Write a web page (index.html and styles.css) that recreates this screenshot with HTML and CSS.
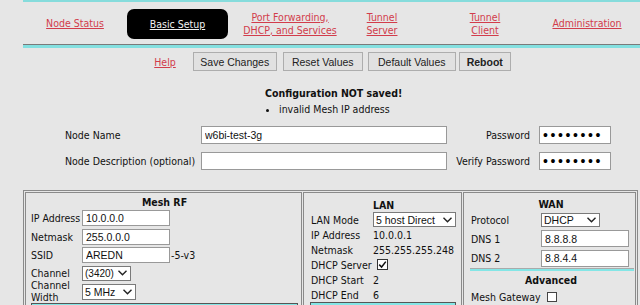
FILE: index.html
```html
<!DOCTYPE html>
<html lang="en">
<head>
  <meta charset="UTF-8" />
  <title>Basic Setup</title>
  <link rel="stylesheet" href="styles.css">
</head>
<body>
<div class="page">

  <div class="topnav">
    <div class="nav-item"><a href="#">Node Status</a></div>
    <div class="nav-item"><a href="#" class="current">Basic Setup</a></div>
    <div class="nav-item"><a href="#">Port Forwarding,<br>DHCP, and Services</a></div>
    <div class="nav-item"><a href="#">Tunnel<br>Server</a></div>
    <div class="nav-item"><a href="#">Tunnel<br>Client</a></div>
    <div class="nav-item"><a href="#">Administration</a></div>
  </div>

  <div class="actions">
    <a href="#" class="help">Help</a>
    <button class="btn save">Save Changes</button>
    <button class="btn reset">Reset Values</button>
    <button class="btn defaults">Default Values</button>
    <button class="btn reboot">Reboot</button>
  </div>

  <div class="notice">
    <div class="notice-title">Configuration NOT saved!</div>
    <ul>
      <li>invalid Mesh IP address</li>
    </ul>
  </div>

  <div class="names">
    <label>Node Name</label>
    <input type="text" class="wide" value="w6bi-test-3g">
    <label class="right">Password</label>
    <input type="password" class="pass" value="xxxxxxxx">

    <label>Node Description (optional)</label>
    <input type="text" class="wide" value="">
    <label class="right">Verify Password</label>
    <input type="password" class="pass" value="xxxxxxxx">
  </div>

  <div class="settings">
    <div class="cell meshrf">
      <div class="cell-title">Mesh RF</div>
      <div class="form rf-form">
        <label>IP Address</label>
        <input type="text" class="field" value="10.0.0.0">
        <label>Netmask</label>
        <input type="text" class="field" value="255.0.0.0">
        <label>SSID</label>
        <div class="with-suffix"><input type="text" class="field" value="AREDN"><span>-5-v3</span></div>
        <label>Channel</label>
        <div><select class="sel chan"><option>(3420)</option></select></div>
        <label class="two-line">Channel<br>Width</label>
        <div><select class="sel chwidth"><option>5 MHz</option></select></div>
      </div>
      <div class="section-bar"></div>
    </div>

    <div class="cell lan">
      <div class="cell-title">LAN</div>
      <div class="form lan-form">
        <label class="first">LAN Mode</label>
        <div class="first"><select class="sel mode"><option>5 host Direct</option></select></div>
        <label>IP Address</label>
        <span>10.0.0.1</span>
        <label>Netmask</label>
        <span>255.255.255.248</span>
        <label class="tall">DHCP Server</label>
        <div class="tall"><input type="checkbox" class="check" checked></div>
        <label>DHCP Start</label>
        <span>2</span>
        <label>DHCP End</label>
        <span>6</span>
      </div>
      <div class="section-bar lan-bar"></div>
    </div>

    <div class="cell wan">
      <div class="cell-title">WAN</div>
      <div class="form wan-form">
        <label>Protocol</label>
        <div><select class="sel proto"><option>DHCP</option></select></div>
        <label>DNS 1</label>
        <input type="text" class="field" value="8.8.8.8">
        <label>DNS 2</label>
        <input type="text" class="field" value="8.8.4.4">
      </div>
      <div class="divider"></div>
      <div class="cell-title sub">Advanced</div>
      <div class="gateway">
        <label>Mesh Gateway</label>
        <input type="checkbox" class="check">
      </div>
    </div>
  </div>

</div>
</body>
</html>
```

FILE: styles.css
```css
body {
  margin: 0;
  padding: 0;
  background: #e6e6e6;
  font-family: "DejaVu Sans Condensed", "DejaVu Sans", sans-serif;
  font-size: 10.5px;
  color: #111;
  overflow: hidden;
}

.page {
  margin-left: 23px;
  width: 616px;
}

a {
  color: #d23c4b;
}

/* top navigation */
.topnav {
  width: 640px;
  height: 43px;
  border-top: 2px solid #86dcdc;
  border-bottom: 3px solid #84e0e0;
  box-shadow: inset 0 -1px 0 #7a7a7a;
  display: grid;
  grid-template-columns: 104px 102px 122px 62px 144px 60px;
  align-items: center;
}

.nav-item {
  display: flex;
  justify-content: center;
  text-align: center;
  white-space: nowrap;
  line-height: 13px;
}

.nav-item .current {
  display: flex;
  align-items: center;
  justify-content: center;
  width: 101px;
  height: 30px;
  margin-top: 1px;
  background: #000;
  color: #f2f2f2;
  border-radius: 7px;
  margin-left: -1px;
}

/* save / reset buttons */
.actions {
  display: flex;
  align-items: center;
  justify-content: center;
  margin-top: 4px;
  padding-left: 3px;
  height: 19px;
}

.help {
  margin-right: 17px;
}

.btn {
  height: 19px;
  padding: 0;
  background: #e1e1e1;
  border: 1px solid #adadad;
  font-family: "Liberation Sans", Arial, sans-serif;
  font-size: 10.5px;
  color: #222;
}

.save { width: 84px; margin-right: 6px; }
.reset { width: 80px; margin-right: 5px; }
.defaults { width: 88px; margin-right: 3px; }
.reboot { width: 52px; font-weight: bold; }

/* error message */
.notice {
  margin: 16px 0 0 242px;
  width: max-content;
}

.notice-title {
  font-weight: bold;
  line-height: 13px;
  text-align: center;
}

.notice ul {
  margin: 3px 0 0 0;
  padding-left: 14px;
  line-height: 13px;
}

/* node name + password */
.names {
  margin: 10px 0 0 42px;
  display: grid;
  grid-template-columns: 136px 246px 92px 72px;
  grid-auto-rows: 18px;
  row-gap: 8px;
  align-items: center;
}

.names .right {
  text-align: right;
  padding-right: 9px;
}

input[type="text"],
input[type="password"] {
  box-sizing: border-box;
  height: 18px;
  padding: 0 3px;
  border: 1px solid #999;
  background: #fff;
  font-family: "Liberation Sans", Arial, sans-serif;
  font-size: 10.5px;
  color: #111;
}

.names .wide { width: 246px; }

.names .pass {
  width: 72px;
  font-size: 14px;
  letter-spacing: 2.6px;
  color: #000;
}

/* three setting columns */
.settings {
  margin-top: 20px;
  width: 611px;
  height: 140px;
  padding: 1px;
  border: 1px solid #8a8a8a;
  display: grid;
  grid-template-columns: 277px 159px 173px;
  gap: 1px;
}

.cell {
  border: 1px solid #8a8a8a;
}

.cell-title {
  font-weight: bold;
  text-align: center;
  line-height: 13px;
}

.form {
  display: grid;
  align-items: center;
}

.form .field {
  width: 88px;
  height: 16px;
}

.sel {
  appearance: none;
  -webkit-appearance: none;
  box-sizing: border-box;
  height: 15px;
  padding: 0 0 0 2px;
  border: 1px solid #7a7a7a;
  border-radius: 0;
  background: #fff url("data:image/svg+xml,%3Csvg xmlns='http://www.w3.org/2000/svg' width='9' height='6'%3E%3Cpath d='M0.5 0.8 L4.5 4.8 L8.5 0.8' fill='none' stroke='%23222' stroke-width='1.4'/%3E%3C/svg%3E") no-repeat right 3px center;
  font-family: "Liberation Sans", Arial, sans-serif;
  font-size: 10.5px;
  color: #111;
}

.check {
  appearance: none;
  -webkit-appearance: none;
  box-sizing: border-box;
  width: 11px;
  height: 11px;
  margin: 0;
  border: 1px solid #333;
  background: #fff;
  vertical-align: middle;
}

.check:checked {
  background: #fff url("data:image/svg+xml,%3Csvg xmlns='http://www.w3.org/2000/svg' width='9' height='9'%3E%3Cpath d='M1.2 4.6 L3.6 7 L7.8 1.6' fill='none' stroke='%23111' stroke-width='1.5'/%3E%3C/svg%3E") no-repeat center;
}

/* mesh rf */
.meshrf {
  padding: 3px 3px 0 5px;
}

.rf-form {
  grid-template-columns: 51px auto;
  grid-auto-rows: 18.4px;
}

.with-suffix {
  display: flex;
  align-items: center;
}

.with-suffix span {
  margin-left: 1px;
}

.sel.chan { width: 49px; font-size: 10px; }
.sel.chwidth { width: 54px; height: 16px; }

.rf-form .two-line {
  line-height: 11.5px;
}

.section-bar {
  margin-top: 2px;
  height: 10px;
  border: 1px solid #555;
  background: #84e6e6;
}

/* lan */
.lan {
  padding: 6px 5px 0 7px;
}

.lan-form {
  grid-template-columns: 62px auto;
  grid-auto-rows: 15px;
}

.lan-form .first {
  height: 18px;
  display: flex;
  align-items: center;
}

.sel.mode { width: 83px; height: 15px; }

.lan-form .tall {
  height: 18px;
  display: flex;
  align-items: center;
}

.lan-form .check {
  margin-left: 4px;
}

.lan-bar {
  margin: 0 0 0 -1px;
}

/* wan */
.wan {
  padding: 5px 4px 0 7px;
}

.wan-form {
  grid-template-columns: 70px auto;
  grid-template-rows: 18px 19px 20px;
}

.sel.proto { width: 59px; height: 14px; }

.wan-form .field {
  height: 17px;
}

.divider {
  margin: 0 -3px 0 -1px;
  border-top: 1px solid #aaa;
  background: #84e6e6;
  height: 2px;
}

.cell-title.sub {
  margin-top: 3px;
}

.gateway {
  margin-top: 2px;
  display: flex;
  align-items: center;
  height: 15px;
}

.gateway .check {
  margin-left: 6px;
  width: 10px;
  height: 10px;
  border-color: #444;
}
```
